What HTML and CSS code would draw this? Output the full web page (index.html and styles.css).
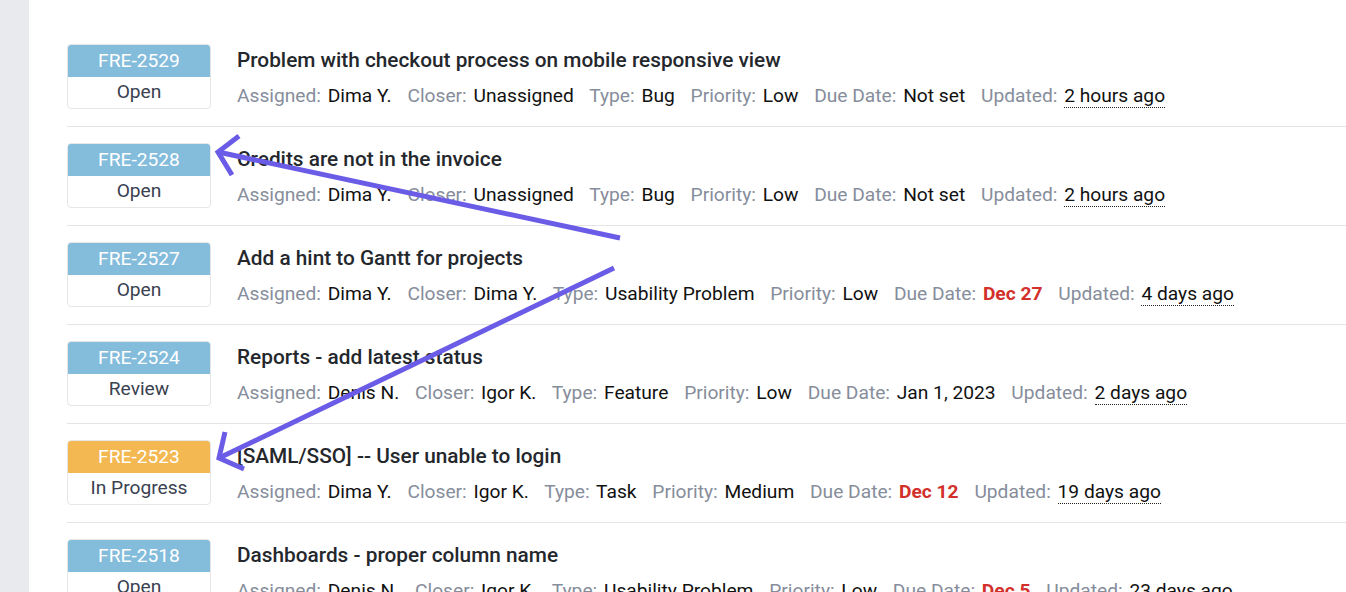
FILE: index.html
```html
<!DOCTYPE html>
<html lang="en">
<head>
    <meta charset="UTF-8">
    <meta name="viewport" content="width=device-width, initial-scale=1.0">
    <title>Issues</title>
    <link rel="stylesheet" href="styles.css">
</head>
<body>
    <div class="layout">
        <aside class="sidebar"></aside>
        <main class="content">
            <div class="issue">
                <div class="badge">
                    <div class="badge-key">FRE-2529</div>
                    <div class="badge-status">Open</div>
                </div>
                <div class="issue-info">
                    <div class="issue-title">Problem with checkout process on mobile responsive view</div>
                    <div class="meta">
                        <span class="item"><span class="label">Assigned:</span> Dima Y.</span>
                        <span class="item"><span class="label">Closer:</span> Unassigned</span>
                        <span class="item"><span class="label">Type:</span> Bug</span>
                        <span class="item"><span class="label">Priority:</span> Low</span>
                        <span class="item"><span class="label">Due Date:</span> Not set</span>
                        <span class="item"><span class="label">Updated:</span> <span class="ago">2 hours ago</span></span>
                    </div>
                </div>
            </div>

            <div class="issue">
                <div class="badge">
                    <div class="badge-key">FRE-2528</div>
                    <div class="badge-status">Open</div>
                </div>
                <div class="issue-info">
                    <div class="issue-title">Credits are not in the invoice</div>
                    <div class="meta">
                        <span class="item"><span class="label">Assigned:</span> Dima Y.</span>
                        <span class="item"><span class="label">Closer:</span> Unassigned</span>
                        <span class="item"><span class="label">Type:</span> Bug</span>
                        <span class="item"><span class="label">Priority:</span> Low</span>
                        <span class="item"><span class="label">Due Date:</span> Not set</span>
                        <span class="item"><span class="label">Updated:</span> <span class="ago">2 hours ago</span></span>
                    </div>
                </div>
            </div>

            <div class="issue">
                <div class="badge">
                    <div class="badge-key">FRE-2527</div>
                    <div class="badge-status">Open</div>
                </div>
                <div class="issue-info">
                    <div class="issue-title">Add a hint to Gantt for projects</div>
                    <div class="meta">
                        <span class="item"><span class="label">Assigned:</span> Dima Y.</span>
                        <span class="item"><span class="label">Closer:</span> Dima Y.</span>
                        <span class="item"><span class="label">Type:</span> Usability Problem</span>
                        <span class="item"><span class="label">Priority:</span> Low</span>
                        <span class="item"><span class="label">Due Date:</span> <span class="overdue">Dec 27</span></span>
                        <span class="item"><span class="label">Updated:</span> <span class="ago">4 days ago</span></span>
                    </div>
                </div>
            </div>

            <div class="issue">
                <div class="badge">
                    <div class="badge-key">FRE-2524</div>
                    <div class="badge-status">Review</div>
                </div>
                <div class="issue-info">
                    <div class="issue-title">Reports - add latest status</div>
                    <div class="meta">
                        <span class="item"><span class="label">Assigned:</span> Denis N.</span>
                        <span class="item"><span class="label">Closer:</span> Igor K.</span>
                        <span class="item"><span class="label">Type:</span> Feature</span>
                        <span class="item"><span class="label">Priority:</span> Low</span>
                        <span class="item"><span class="label">Due Date:</span> Jan 1, 2023</span>
                        <span class="item"><span class="label">Updated:</span> <span class="ago">2 days ago</span></span>
                    </div>
                </div>
            </div>

            <div class="issue">
                <div class="badge">
                    <div class="badge-key progress">FRE-2523</div>
                    <div class="badge-status">In Progress</div>
                </div>
                <div class="issue-info">
                    <div class="issue-title">[SAML/SSO] -- User unable to login</div>
                    <div class="meta">
                        <span class="item"><span class="label">Assigned:</span> Dima Y.</span>
                        <span class="item"><span class="label">Closer:</span> Igor K.</span>
                        <span class="item"><span class="label">Type:</span> Task</span>
                        <span class="item"><span class="label">Priority:</span> Medium</span>
                        <span class="item"><span class="label">Due Date:</span> <span class="overdue">Dec 12</span></span>
                        <span class="item"><span class="label">Updated:</span> <span class="ago">19 days ago</span></span>
                    </div>
                </div>
            </div>

            <div class="issue">
                <div class="badge">
                    <div class="badge-key">FRE-2518</div>
                    <div class="badge-status">Open</div>
                </div>
                <div class="issue-info">
                    <div class="issue-title">Dashboards - proper column name</div>
                    <div class="meta">
                        <span class="item"><span class="label">Assigned:</span> Denis N.</span>
                        <span class="item"><span class="label">Closer:</span> Igor K.</span>
                        <span class="item"><span class="label">Type:</span> Usability Problem</span>
                        <span class="item"><span class="label">Priority:</span> Low</span>
                        <span class="item"><span class="label">Due Date:</span> <span class="overdue">Dec 5</span></span>
                        <span class="item"><span class="label">Updated:</span> <span class="ago">23 days ago</span></span>
                    </div>
                </div>
            </div>
        </main>
    </div>

    <!-- annotation arrows drawn over the list -->
    <svg class="arrows" width="1346" height="592" viewBox="0 0 1346 592">
        <g fill="none" stroke="#6b5ce7" stroke-width="5" stroke-linecap="butt" stroke-linejoin="miter">
            <path d="M620 238 L218 152"/>
            <path d="M239 136 L218 152 L232 175"/>
            <path d="M614 268 L219 458"/>
            <path d="M225 432 L219 458 L244 469"/>
        </g>
    </svg>
</body>
</html>
```

FILE: styles.css
```css
body {
    margin: 0;
    font-family: Roboto, "Liberation Sans", Arial, sans-serif;
    background: #fff;
    color: #111;
    overflow: hidden;
}
.layout {
    display: flex;
    min-height: 100vh;
}
.sidebar {
    width: 29px;
    flex-shrink: 0;
    background: #e9eaee;
}
.content {
    flex: 1;
    padding: 28px 0 0 38px;
}
.issue {
    display: flex;
    align-items: flex-start;
    padding: 16px 0 16px 0;
    border-bottom: 1px solid #e4e4e4;
}
.badge {
    width: 144px;
    box-sizing: border-box;
    flex-shrink: 0;
    border: 1px solid #e6e6e6;
    border-radius: 4px;
    overflow: hidden;
    text-align: center;
    font-size: 19.2px;
}
.badge-key {
    background: #84bcdc;
    color: #fff;
    height: 32px;
    line-height: 32px;
}
.badge-key.progress {
    background: #f3b851;
}
.badge-status {
    color: #3a4150;
    height: 31px;
    line-height: 30px;
}
.issue-info {
    margin-left: 26px;
    padding-top: 1px;
}
.issue-title {
    font-size: 20.8px;
    font-weight: 500;
    color: #24272c;
    line-height: 30px;
}
.meta {
    margin-top: 6px;
    margin-bottom: -1px;
    font-size: 19.2px;
    line-height: 30px;
    white-space: nowrap;
}
.item {
    margin-right: 11px;
}
.label {
    color: #868d9b;
    margin-right: 2px;
}
.ago {
    border-bottom: 1px dotted #222;
}
.overdue {
    color: #d2302b;
    font-weight: 700;
}
.arrows {
    position: absolute;
    left: 0;
    top: 0;
    pointer-events: none;
}
```
